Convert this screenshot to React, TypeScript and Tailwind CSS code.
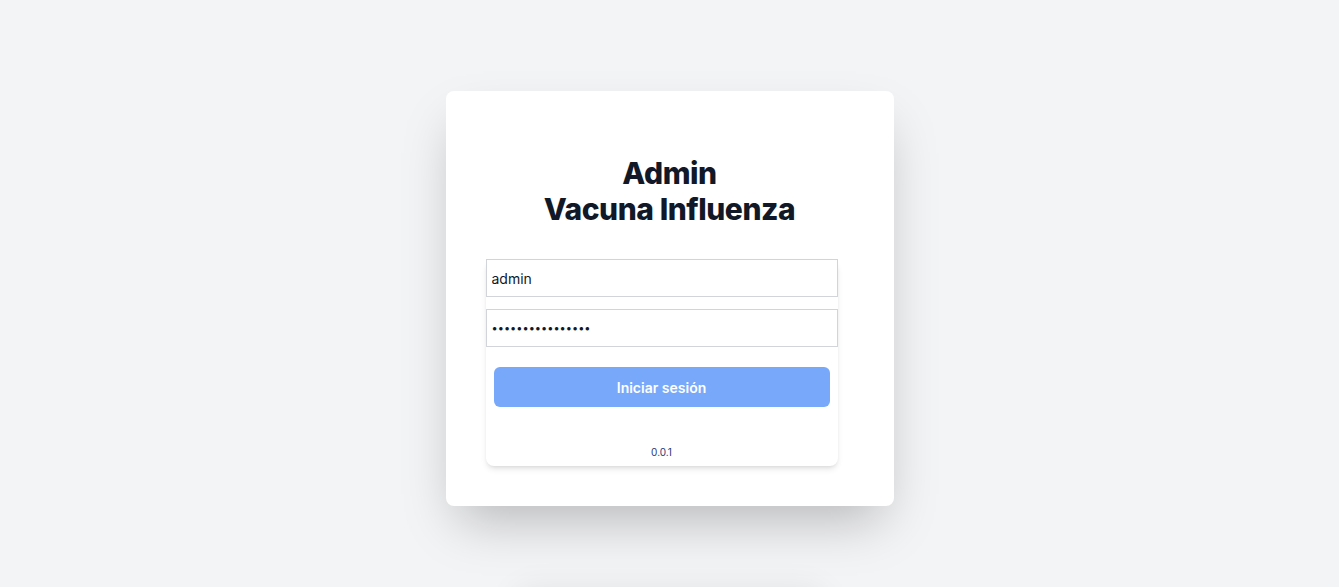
import React from "react";

export default function App() {
  return (
    <div
      className="h-screen overflow-hidden bg-[#f3f4f6] flex flex-col items-center pt-[91px]"
      style={{ fontFamily: "Inter, 'Noto Sans', sans-serif" }}
    >
      <div className="w-[448px] shrink-0 bg-white rounded-lg shadow-2xl pt-16 pb-10">
        <h1 className="text-center text-[30px] leading-[36px] font-extrabold tracking-[-0.015em] text-[#111827]">
          Admin
          <br />
          Vacuna Influenza
        </h1>
        <div className="mt-8 ml-10 w-[352px] bg-white rounded-lg shadow-md flex flex-col">
          <input
            readOnly
            value="admin"
            className="h-[38px] w-full border border-[#d1d5db] px-[5px] text-[14px] text-[#111827] outline-none"
          />
          <input
            readOnly
            type="password"
            value="abcdefghijklmnop"
            className="mt-3 h-[38px] w-full border border-[#d1d5db] px-[5px] text-[11px] text-[#111827] outline-none"
          />
          <button className="mt-5 mx-2 h-10 rounded-md bg-[#78a8f9] text-white text-[14px] font-semibold">
            Iniciar sesión
          </button>
          <div className="mt-[37px] pb-[6px] text-center text-[10px] leading-4 text-[#28367a]">
            0.0.1
          </div>
        </div>
      </div>
      <div className="mt-[94px] w-[290px] h-[80px] shrink-0 bg-white rounded-lg shadow-[0_0_32px_12px_rgba(0,0,0,0.07)]" />
    </div>
  );
}
